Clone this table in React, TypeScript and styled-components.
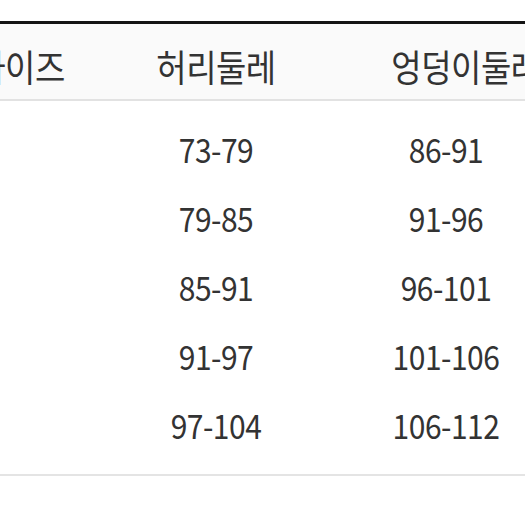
import { createGlobalStyle, styled } from "styled-components"

const GlobalStyle = createGlobalStyle`
    html, body {
        margin: 0;
        padding: 0;
        background-color: #fff;
        overflow: hidden;
    }
    body {
        font-family: "Noto Sans CJK KR", "Noto Sans", sans-serif;
        color: #333;
    }
`

const Page = styled.main`
    width: 525px;
    height: 525px;
    overflow: hidden;
    padding-top: 21px;
    box-sizing: border-box;
`

const Table = styled.section`
    margin-left: -78px;
    width: 656px;
    border-top: 3px solid #141414;
    border-bottom: 2px solid #e4e4e4;
`

const Row = styled.div<{ $head?: boolean }>`
    display: grid;
    grid-template-columns: 196px 196px 264px;
    align-items: center;
    box-sizing: border-box;
    height: ${(p) => (p.$head ? "77px" : "69px")};
    padding-top: ${(p) => (p.$head ? "9px" : "0")};
    background-color: ${(p) => (p.$head ? "#fafafa" : "#fff")};
    border-bottom: ${(p) => (p.$head ? "2px solid #e2e2e2" : "none")};
`

const Body = styled.div`
    padding: 12px 0 16px;
`

const Cell = styled.span<{ $head?: boolean; $shift?: number }>`
    text-align: center;
    font-size: ${(p) => (p.$head ? "33px" : "30px")};
    font-weight: 400;
    letter-spacing: -0.5px;
    color: #333;
    line-height: 1;
    padding-left: ${(p) => p.$shift ?? 0}px;
    display: inline-block;
    transform: scaleY(1.12);
`

const rows = [
    ["", "73-79", "86-91"],
    ["", "79-85", "91-96"],
    ["", "85-91", "96-101"],
    ["", "91-97", "101-106"],
    ["", "97-104", "106-112"],
]

export default function App() {
    return (
        <Page>
            <GlobalStyle />
            <Table>
                <Row $head>
                    <Cell $head>사이즈</Cell>
                    <Cell $head>허리둘레</Cell>
                    <Cell $head $shift={40}>엉덩이둘레</Cell>
                </Row>
                <Body>
                    {rows.map((r, i) => (
                        <Row key={i}>
                            {r.map((c, j) => (
                                <Cell key={j}>{c}</Cell>
                            ))}
                        </Row>
                    ))}
                </Body>
            </Table>
        </Page>
    )
}
